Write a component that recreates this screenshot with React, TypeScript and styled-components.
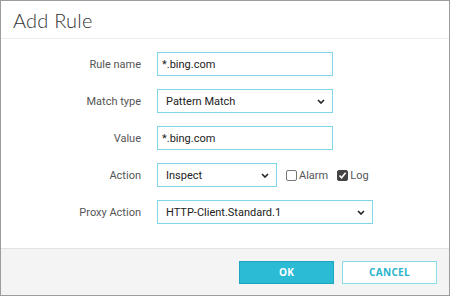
import React from 'react';
import styled, { createGlobalStyle } from 'styled-components';

const GlobalStyle = createGlobalStyle`
  html, body {
    margin: 0;
    padding: 0;
    background: #ffffff;
  }
  * {
    box-sizing: border-box;
  }
`;

const Dialog = styled.div`
  width: 450px;
  height: 296px;
  border: 1px solid #9c9c9c;
  background: #ffffff;
  display: flex;
  flex-direction: column;
  font-family: Roboto, 'Liberation Sans', sans-serif;
`;

const Header = styled.div`
  height: 38px;
  flex-shrink: 0;
  border-bottom: 1px solid #ececec;
  display: flex;
  align-items: center;
  padding-left: 12px;
`;

const Title = styled.h1`
  margin: 0;
  font-family: Lato, 'Open Sans', sans-serif;
  font-weight: 300;
  font-size: 20px;
  letter-spacing: 0.2px;
  color: #333333;
`;

const Form = styled.div`
  display: grid;
  grid-template-columns: 140px auto;
  column-gap: 16px;
  row-gap: 13px;
  padding-top: 13px;
  align-items: center;
`;

const Label = styled.label`
  text-align: right;
  font-size: 11px;
  color: #555555;
`;

const Field = styled.div<{ $width: number }>`
  width: ${(p) => p.$width}px;
  height: 24px;
  border: 1px solid #7fd6e6;
  background: #ffffff;
  display: flex;
  align-items: center;
  justify-content: space-between;
  padding: 0 7px 0 4px;
  font-size: 11px;
  color: #222222;
`;

const SelectField = styled(Field)`
  padding-left: 8px;
`;

const Inline = styled.div`
  display: flex;
  align-items: center;
`;

const Check = styled.span<{ $checked?: boolean }>`
  width: 11px;
  height: 11px;
  border: 1px solid ${(p) => (p.$checked ? '#444444' : '#777777')};
  border-radius: 2px;
  background: ${(p) => (p.$checked ? '#444444' : '#ffffff')};
  display: inline-flex;
  align-items: center;
  justify-content: center;
  margin-right: 2px;
`;

const CheckItem = styled.span`
  display: inline-flex;
  align-items: center;
  font-size: 11px;
  color: #555555;
  margin-left: 9px;
`;

const Footer = styled.div`
  margin-top: auto;
  height: 47px;
  border-top: 1px solid #e2e2e2;
  background: #f4f4f4;
  display: flex;
  align-items: center;
  justify-content: flex-end;
  gap: 8px;
  padding-right: 12px;
`;

const Button = styled.button<{ $primary?: boolean }>`
  width: 95px;
  height: 23px;
  font-family: 'Open Sans', sans-serif;
  font-weight: 700;
  font-size: 10px;
  letter-spacing: 0.3px;
  border: 1px solid ${(p) => (p.$primary ? '#1ea6c0' : '#8bdcea')};
  background: ${(p) => (p.$primary ? '#2bbbd5' : '#ffffff')};
  color: ${(p) => (p.$primary ? '#ffffff' : '#29b3cc')};
  padding: 0;
`;

const Chevron = () => (
  <svg width="8" height="5" viewBox="0 0 8 5">
    <path d="M1 1 L4 4 L7 1" fill="none" stroke="#222" strokeWidth="1.6" />
  </svg>
);

const Tick = () => (
  <svg width="9" height="9" viewBox="0 0 9 9">
    <path d="M1.5 4.5 L3.6 6.8 L7.6 1.8" fill="none" stroke="#fff" strokeWidth="1.6" />
  </svg>
);

const App: React.FC = () => {
  return (
    <>
      <GlobalStyle />
      <Dialog>
        <Header>
          <Title>Add Rule</Title>
        </Header>
        <Form>
          <Label>Rule name</Label>
          <Field $width={176}>*.bing.com</Field>

          <Label>Match type</Label>
          <SelectField $width={176}>
            Pattern Match <Chevron />
          </SelectField>

          <Label>Value</Label>
          <Field $width={176}>*.bing.com</Field>

          <Label>Action</Label>
          <Inline>
            <SelectField $width={120}>
              Inspect <Chevron />
            </SelectField>
            <CheckItem>
              <Check />
              Alarm
            </CheckItem>
            <CheckItem>
              <Check $checked>
                <Tick />
              </Check>
              Log
            </CheckItem>
          </Inline>

          <Label>Proxy Action</Label>
          <SelectField $width={216}>
            HTTP-Client.Standard.1 <Chevron />
          </SelectField>
        </Form>
        <Footer>
          <Button $primary>OK</Button>
          <Button>CANCEL</Button>
        </Footer>
      </Dialog>
    </>
  );
};

export default App;
